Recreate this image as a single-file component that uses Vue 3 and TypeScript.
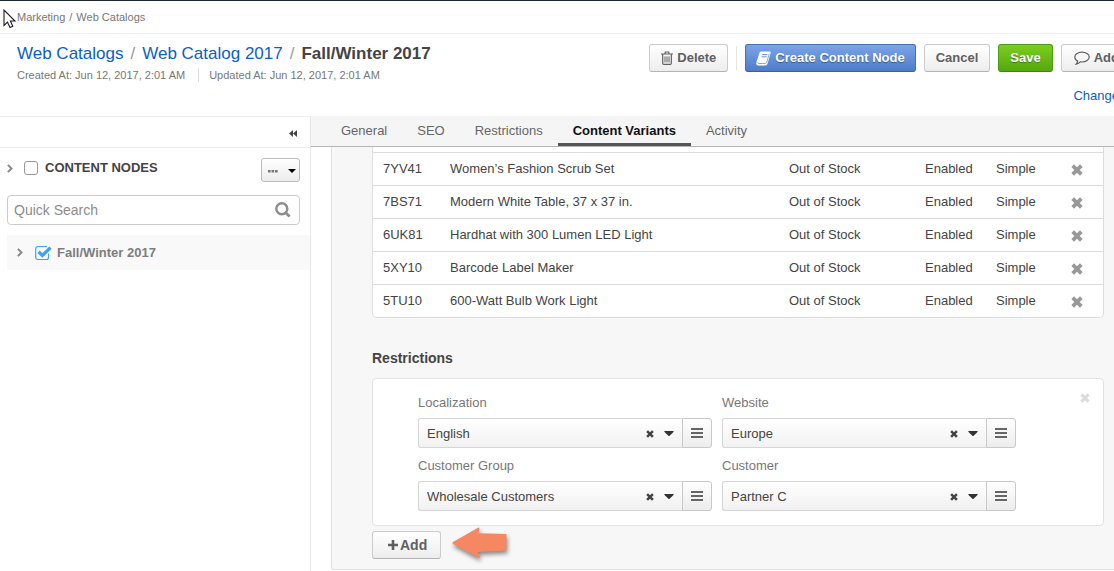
<script setup lang="ts">
import { reactive, ref } from 'vue'

interface Product {
  sku: string
  name: string
}

interface Field {
  id: string
  label: string
  options: string[]
}

const tabs = ['General', 'SEO', 'Restrictions', 'Content Variants', 'Activity']
const activeTab = ref('Content Variants')

const products = ref<Product[]>([
  { sku: '7YV41', name: 'Women’s Fashion Scrub Set' },
  { sku: '7BS71', name: 'Modern White Table, 37 x 37 in.' },
  { sku: '6UK81', name: 'Hardhat with 300 Lumen LED Light' },
  { sku: '5XY10', name: 'Barcode Label Maker' },
  { sku: '5TU10', name: '600-Watt Bulb Work Light' },
])

const fields: Field[] = [
  { id: 'localization', label: 'Localization', options: ['English'] },
  { id: 'website', label: 'Website', options: ['Europe'] },
  { id: 'group', label: 'Customer Group', options: ['Wholesale Customers'] },
  { id: 'customer', label: 'Customer', options: ['Partner C'] },
]

const values = reactive<Record<string, string>>({
  localization: 'English',
  website: 'Europe',
  group: 'Wholesale Customers',
  customer: 'Partner C',
})

const allNodes = ref(false)
const season = ref(true)
const query = ref('')

function removeProduct(sku: string) {
  products.value = products.value.filter((p) => p.sku !== sku)
}
</script>

<template>
  <div class="page">
    <svg class="cursor" width="14" height="20" viewBox="0 0 14 20" aria-hidden="true">
      <path d="M1 1V16.5L4.5 13.2L7 18.5L9.8 17.2L7.4 12H12Z" fill="#fff" stroke="#1b1b2b" stroke-width="1.1" />
    </svg>

    <nav class="crumbs" aria-label="Breadcrumb">
      <span>Marketing</span><span>/</span><span>Web Catalogs</span>
    </nav>

    <header class="header">
      <div class="heading">
        <h1 class="title">
          <a href="#">Web Catalogs</a><span class="slash">/</span><a href="#">Web Catalog 2017</a><span class="slash">/</span><span>Fall/Winter 2017</span>
        </h1>
        <div class="meta">
          <span>Created At: Jun 12, 2017, 2:01 AM</span>
          <span class="updated">Updated At: Jun 12, 2017, 2:01 AM</span>
        </div>
      </div>
      <div class="actions">
        <div class="buttons">
          <button type="button" class="btn">
            <svg width="12" height="14" viewBox="0 0 12 14" fill="none" stroke="currentColor" aria-hidden="true">
              <path d="M0 3H12M3.8 3L4.4 1H7.6L8.2 3M1.7 3V12.2Q1.7 13.4 2.8 13.4H9.2Q10.3 13.4 10.3 12.2V3" stroke-width="1.2" />
              <path d="M4 5.4V11.4M6 5.4V11.4M8 5.4V11.4" />
            </svg>
            Delete
          </button>
          <span class="divider"></span>
          <button type="button" class="btn blue">
            <svg width="15" height="15" viewBox="0 0 15 15" aria-hidden="true">
              <path d="M5 .5H13.6Q14.9.6 14.6 2L11.7 12.3Q11.2 14.5 9.2 14.5H2.2Q.1 14.4.2 12L3.4 2Q3.8.6 5 .5Z" fill="#fff" />
              <path d="M6.2 3.6H11.4M5.5 5.8H10.7" stroke="#6890d5" stroke-width="1" />
              <path d="M1.6 11.4Q1.6 12.5 2.6 12.5H9.3Q10.4 12.4 10.8 11.2L13.3 2.6" fill="none" stroke="#6890d5" stroke-width=".8" />
            </svg>
            Create Content Node
          </button>
          <button type="button" class="btn">Cancel</button>
          <button type="button" class="btn green">Save</button>
          <button type="button" class="btn note">
            <svg width="16" height="14" viewBox="0 0 16 14" fill="none" stroke="currentColor" aria-hidden="true">
              <path d="M8 1.2C12 1.2 15.2 3.3 15.2 6.1S12 11 8 11Q7.2 11 6.4 10.9Q4.6 12.7 2.2 13.1Q3.5 11.6 3.6 10.1Q.8 8.7.8 6.1C.8 3.3 4 1.2 8 1.2Z" stroke-width="1.2" />
            </svg>
            Add note
          </button>
        </div>
        <a href="#" class="history">Change History</a>
      </div>
    </header>

    <div class="body">
      <aside class="sidebar">
        <div class="collapse-row">
          <button type="button" class="plain" aria-label="Collapse sidebar">
            <svg width="8" height="7" viewBox="0 0 8 7" aria-hidden="true">
              <path d="M4 0V7L0 3.5ZM8 0V7L4 3.5Z" fill="#444" />
            </svg>
          </button>
        </div>
        <div class="tree-head">
          <button type="button" class="plain" aria-label="Expand content nodes">
            <svg width="6" height="9" viewBox="0 0 6 9" aria-hidden="true"><path d="M.9 .9L4.5 4.5L.9 8.1" fill="none" stroke="#888" stroke-width="2" /></svg>
          </button>
          <label class="check-label">
            <input v-model="allNodes" type="checkbox" class="box" />
            <span>CONTENT NODES</span>
          </label>
          <button type="button" class="more" aria-label="More actions">
            <svg width="10" height="3" viewBox="0 0 10 3" aria-hidden="true"><path d="M0 0H2.6V2.6H0ZM3.5 0H6.1V2.6H3.5ZM7 0H9.6V2.6H7Z" fill="#777" /></svg>
            <svg width="8" height="4" viewBox="0 0 8 4" aria-hidden="true"><path d="M0 0H8L4 4Z" fill="#000" /></svg>
          </button>
        </div>
        <div class="search">
          <input v-model="query" type="text" placeholder="Quick Search" aria-label="Quick Search" />
          <button type="button" class="plain" aria-label="Search">
            <svg width="16" height="16" viewBox="0 0 16 16" fill="none" stroke="#8c8c8c" aria-hidden="true">
              <circle cx="6.8" cy="6.8" r="5.5" stroke-width="2.4" /><path d="M10.8 10.8L14.6 14.4" stroke-width="2.8" />
            </svg>
          </button>
        </div>
        <div class="node">
          <button type="button" class="plain" aria-label="Expand Fall/Winter 2017">
            <svg width="6" height="9" viewBox="0 0 6 9" aria-hidden="true"><path d="M.9 .9L4.5 4.5L.9 8.1" fill="none" stroke="#888" stroke-width="2" /></svg>
          </button>
          <label class="check-label">
            <span class="tick">
              <input v-model="season" type="checkbox" />
              <svg width="17" height="16" viewBox="0 0 17 16" fill="none" stroke="#3ba3f8" aria-hidden="true">
                <path d="M13.5 8.5V12.2Q13.5 14.5 11.5 14.5H3Q.7 14.5.7 12.2V3.8Q.7 1.5 3 1.5H12" stroke-width="1.2" />
                <path v-if="season" d="M3.6 6.8L7.4 10.4L15.5 2.6" stroke-width="3.4" />
              </svg>
            </span>
            <span>Fall/Winter 2017</span>
          </label>
        </div>
      </aside>

      <main class="main">
        <div class="tabs" role="tablist">
          <button
            v-for="tab in tabs"
            :key="tab"
            type="button"
            role="tab"
            :aria-selected="tab === activeTab"
            :class="['tab', { active: tab === activeTab }]"
            @click="activeTab = tab"
          >{{ tab }}</button>
        </div>

        <section class="panel">
          <div class="table-frame">
            <table>
              <colgroup>
                <col class="c-sku" /><col /><col class="c-stock" /><col class="c-status" /><col class="c-type" /><col class="c-remove" />
              </colgroup>
              <tbody>
                <tr v-for="product in products" :key="product.sku">
                  <td>{{ product.sku }}</td>
                  <td>{{ product.name }}</td>
                  <td>Out of Stock</td>
                  <td>Enabled</td>
                  <td>Simple</td>
                  <td>
                    <button type="button" class="plain remove" :aria-label="'Remove ' + product.name" @click="removeProduct(product.sku)">
                      <svg width="12" height="12" viewBox="0 0 12 12" aria-hidden="true"><path d="M1.7 1.7L10.3 10.3M10.3 1.7L1.7 10.3" stroke="#999" stroke-width="3.8" /></svg>
                    </button>
                  </td>
                </tr>
              </tbody>
            </table>
          </div>

          <h2>Restrictions</h2>

          <div class="card">
            <div class="fields">
              <div v-for="field in fields" :key="field.id">
                <label :for="field.id">{{ field.label }}</label>
                <div class="combo">
                  <div class="choice">
                    <select :id="field.id" v-model="values[field.id]">
                      <option v-for="option in field.options" :key="option">{{ option }}</option>
                    </select>
                    <button type="button" class="plain clear" :aria-label="'Clear ' + field.label" @click="values[field.id] = ''">
                      <svg width="8" height="8" viewBox="0 0 8 8" aria-hidden="true"><path d="M1.1 1.1L6.9 6.9M6.9 1.1L1.1 6.9" stroke="#444" stroke-width="2.5" /></svg>
                    </button>
                    <svg class="caret" width="10" height="5" viewBox="0 0 10 5" aria-hidden="true"><path d="M.3 0H9.7Q9.8.7 9 1.4L5.6 4.7Q5 5.2 4.4 4.7L1 1.4Q.2.7.3 0Z" fill="#333" /></svg>
                  </div>
                  <button type="button" class="list" :aria-label="'Browse ' + field.label">
                    <svg width="12" height="10" viewBox="0 0 12 10" aria-hidden="true"><path d="M0 1H12M0 5H12M0 9H12" stroke="#666" stroke-width="2" /></svg>
                  </button>
                </div>
              </div>
            </div>
            <button type="button" class="plain" aria-label="Remove restriction">
              <svg width="10" height="10" viewBox="0 0 10 10" aria-hidden="true"><path d="M1.4 1.4L8.6 8.6M8.6 1.4L1.4 8.6" stroke="#dcdcdc" stroke-width="3.2" /></svg>
            </button>
          </div>

          <div class="add-row">
            <button type="button" class="btn add">
              <svg width="10" height="10" viewBox="0 0 10 10" aria-hidden="true"><path d="M5 0V10M0 5H10" stroke="#606060" stroke-width="2.6" /></svg>
              Add
            </button>
            <svg class="pointer" width="56" height="32" viewBox="0 0 56 32" aria-hidden="true">
              <path d="M1 17Q0 16 1 15L26.5 .5Q27.5 .5 27.5 1.5L26.5 6.2L54.5 7V23.5L25.5 25L28 30Q28 31.2 27 31Z" fill="#f68763" />
            </svg>
          </div>
        </section>
      </main>
    </div>
  </div>
</template>

<style>
body {
  background: #fff;
}
</style>

<style scoped>
* {
  box-sizing: border-box;
}
.page {
  position: relative;
  display: flex;
  flex-direction: column;
  min-height: 100vh;
  overflow: hidden;
  border-top: 1px solid #1d2733;
  font: 13px/18px "Liberation Sans", Arial, sans-serif;
  color: #444;
}
.cursor {
  position: absolute;
  left: 3px;
  top: 8px;
}
button,
input,
select {
  font: inherit;
  color: inherit;
  margin: 0;
}
svg {
  display: block;
  flex: none;
}
a {
  color: #0a5fc4;
  text-decoration: none;
}
.plain {
  display: block;
  flex: none;
  padding: 0;
  border: 0;
  background: none;
}
.crumbs {
  display: flex;
  gap: 4px;
  padding: 7px 17px;
  border-bottom: 1px solid #eee;
  font-size: 11px;
  color: #777;
}
.header {
  display: flex;
  justify-content: space-between;
  height: 82px;
  margin-right: -49px;
  padding: 10px 0 0 17px;
}
.title {
  display: flex;
  gap: 7px;
  margin: 0;
  font-size: 17px;
  line-height: 20px;
  white-space: nowrap;
}
.title a,
.slash {
  font-weight: normal;
}
.slash {
  color: #999;
}
.meta {
  display: flex;
  gap: 13px;
  margin-top: 4px;
  font-size: 11px;
  line-height: 14px;
  color: #777;
}
.updated {
  padding-left: 10px;
  border-left: 1px solid #ddd;
}
.actions {
  display: flex;
  flex: none;
  flex-direction: column;
  align-items: flex-end;
  gap: 15px;
}
.buttons {
  display: flex;
  gap: 8px;
}
.btn {
  display: flex;
  align-items: center;
  gap: 4px;
  height: 28px;
  padding: 0 11px;
  border: 1px solid #ccc;
  border-bottom-color: #b3b3b3;
  border-radius: 3px;
  background: linear-gradient(#fff, #ededed);
  color: #606060;
  font-weight: bold;
  white-space: nowrap;
}
.blue {
  padding: 0 10px;
  border-color: #456fae #456fae #3a5f9a;
  background: linear-gradient(#7ba4e8, #4f7cc8);
  color: #fff;
  text-shadow: 0 1px 1px #35598f;
}
.green {
  border-color: #4b9c12 #4b9c12 #3d8410;
  background: linear-gradient(#7ccd20, #55a80e);
  color: #fff;
  text-shadow: 0 1px 1px #3a7d0a;
}
.note {
  padding: 0 12px;
}
.divider {
  width: 1px;
  height: 24px;
  margin: 2px 0;
  background: #e5e5e5;
}
.body {
  display: flex;
  flex: 1;
}
.sidebar {
  flex: 0 0 311px;
  border-top: 1px solid #eee;
  border-right: 1px solid #e8e8e8;
}
.collapse-row {
  display: flex;
  align-items: center;
  justify-content: flex-end;
  height: 31px;
  padding: 2px 13px 0 0;
  border-bottom: 1px solid #eee;
}
.tree-head {
  display: flex;
  align-items: center;
  gap: 11px;
  height: 40px;
  padding: 0 10px 0 7px;
}
.check-label {
  display: flex;
  align-items: center;
  gap: 7px;
  font-weight: bold;
}
.box {
  width: 14px;
  height: 14px;
  border: 1px solid #999;
  border-radius: 3px;
  background: #fff;
  appearance: none;
}
.box:checked {
  background: #3ba3f8;
}
.more {
  display: flex;
  align-items: center;
  justify-content: space-between;
  width: 39px;
  height: 24px;
  margin: 4px 0 0 auto;
  padding: 2px 3px 0 6px;
  border: 1px solid #bbb;
  border-radius: 3px;
  background: linear-gradient(#fff, #ececec);
}
.search {
  display: flex;
  align-items: center;
  height: 30px;
  margin: 7px 10px 10px 7px;
  padding-right: 8px;
  border: 1px solid #ccc;
  border-radius: 4px;
  font-size: 14px;
}
.search input {
  flex: 1;
  min-width: 0;
  padding: 0 6px;
  border: 0;
  outline: 0;
  background: none;
}
.search input::placeholder {
  color: #8c8c8c;
}
.node {
  display: flex;
  align-items: center;
  gap: 12px;
  height: 35px;
  margin-left: 7px;
  padding-left: 10px;
  background: #f9f9f9;
  color: #7d7d7d;
}
.node .check-label {
  gap: 5px;
}
.tick {
  position: relative;
}
.tick input {
  position: absolute;
  inset: 0;
  opacity: 0;
}
.main {
  flex: 1;
  min-width: 0;
}
.tabs {
  display: flex;
  height: 31px;
  padding-left: 15px;
  border-bottom: 1px solid #b5b5b5;
  background: #f5f5f5;
}
.tab {
  padding: 0 15px;
  border: 0;
  border-top: 3px solid transparent;
  border-bottom: 3px solid transparent;
  background: none;
  color: #666;
  white-space: nowrap;
}
.tab.active {
  border-bottom-color: #555;
  color: #111;
  font-weight: bold;
}
.panel {
  margin-left: 20px;
  padding: 0 10px 10px 40px;
  border: solid #e2e2e2;
  border-width: 0 0 1px 1px;
  border-bottom-left-radius: 3px;
  background: #f7f7f7;
}
.table-frame {
  padding-top: 5px;
  border: solid #ddd;
  border-width: 0 1px 1px;
  border-radius: 0 0 5px 5px;
  background: #fff;
}
table {
  width: 100%;
  table-layout: fixed;
  border-spacing: 0;
}
td {
  height: 33px;
  padding: 0 10px;
  border-top: 1px solid #ddd;
  white-space: nowrap;
}
.c-sku {
  width: 67px;
}
.c-stock {
  width: 136px;
}
.c-status {
  width: 71px;
}
.c-type {
  width: 75px;
}
.c-remove {
  width: 42px;
}
.remove {
  margin-top: 1px;
}
h2 {
  margin: 30px 0 10px;
  font-size: 14px;
  line-height: 20px;
}
.card {
  display: flex;
  align-items: flex-start;
  justify-content: space-between;
  padding: 14px 13px 14px 45px;
  border: 1px solid #e2e2e2;
  border-radius: 4px;
  background: #fff;
}
.fields {
  display: grid;
  flex: 1;
  grid-template-columns: repeat(2, minmax(0, 294px));
  gap: 8px 10px;
}
.fields label {
  display: block;
  margin-bottom: 5px;
  line-height: 20px;
  color: #777;
}
.combo {
  display: flex;
  height: 30px;
}
.choice {
  position: relative;
  flex: 1;
}
.choice select {
  width: 100%;
  height: 30px;
  padding: 2px 70px 0 8px;
  border: 1px solid #d5d5d5;
  border-right: 0;
  border-radius: 3px 0 0 3px;
  background: linear-gradient(#fff, #f1f1f1);
  appearance: none;
}
.clear {
  position: absolute;
  top: 12px;
  right: 28px;
}
.caret {
  position: absolute;
  top: 13px;
  right: 8px;
  pointer-events: none;
}
.list {
  display: flex;
  align-items: center;
  justify-content: center;
  width: 30px;
  padding: 0;
  border: 1px solid #c8c8c8;
  border-radius: 0 3px 3px 0;
  background: linear-gradient(#fff, #ececec);
}
.add-row {
  display: flex;
  align-items: flex-start;
  gap: 11px;
  height: 28px;
  margin-top: 5px;
}
.add {
  gap: 2px;
  padding: 0 13px 0 15px;
  font-size: 14px;
}
.pointer {
  margin-top: -4px;
  overflow: visible;
  filter: drop-shadow(1px 3px 2px rgba(0, 0, 0, 0.45));
}
</style>
